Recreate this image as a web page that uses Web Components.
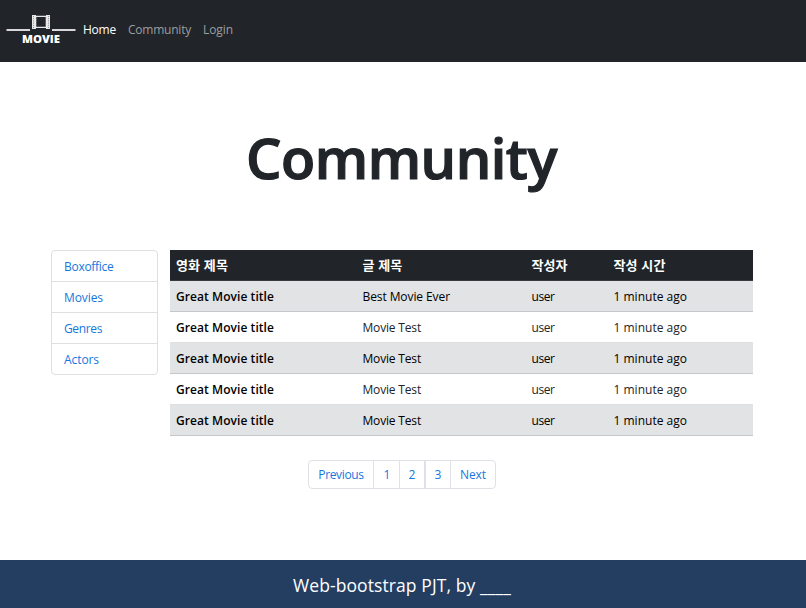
<!DOCTYPE html>
<html lang="ko">
<head>
<meta charset="utf-8">
<title>Community</title>
<style>
html, body { margin: 0; height: 100%; background: #fff; overflow: hidden; }
body { font: 400 12px/18px "Open Sans", "Noto Sans", "Noto Sans CJK KR", sans-serif; color: #212529; }
</style>
</head>
<body>
<community-page></community-page>
<script>
const define = (name, html, setup) => {
  customElements.define(name, class extends HTMLElement {
    connectedCallback() {
      if (this.shadowRoot) return;
      const t = document.createElement('template');
      t.innerHTML = typeof html === 'function' ? html(this) : html;
      this.attachShadow({ mode: 'open' }).append(t.content.cloneNode(true));
      if (setup) setup(this);
    }
  });
};

// A run of text tracked so that it takes the width given in its "w" attribute.
define('text-run', el => `<style>:host{display:inline-block;white-space:pre}</style><span>${el.getAttribute('text')}</span>`, el => {
  const span = el.shadowRoot.querySelector('span');
  const natural = span.getBoundingClientRect().width;
  const spacing = (parseFloat(el.getAttribute('w')) - natural) / span.textContent.length;
  span.style.letterSpacing = spacing.toFixed(3) + 'px';
});

define('movie-logo', `
<style>
:host{display:block;width:70px;height:32px}
svg{display:block}
text{font:800 11px "Open Sans",sans-serif;fill:#fff}
</style>
<svg width="70" height="32" viewBox="0 0 70 32">
  <path d="M0.500 16h23.500M46 16h23.500" stroke="#d9d6dc" stroke-width="1.800"/>
  <path fill="#e9e8e8" fill-rule="evenodd" d="M26 1h4v.8h10v-.8h4v14h-4v-1h-10v1h-4zM30.300 3v9.800h9.400v-9.800z"/>
  <path d="M27.500 2v12.500M42.500 2v12.500" stroke="#8b8d90" stroke-width="1" stroke-dasharray="1 1.200"/>
  <text x="16" y="29" textLength="38" lengthAdjust="spacingAndGlyphs">MOVIE</text>
</svg>`);

define('nav-bar', `
<style>
:host{display:flex;box-sizing:border-box;height:62px;background:#212529;padding:14px 6px 0}
nav{display:flex;gap:12px;padding:7px 0 0 7px;color:#9b9da0}
.active{color:#fff}
</style>
<movie-logo></movie-logo>
<nav><text-run class="active" w="33" text="Home"></text-run><text-run w="63" text="Community"></text-run><text-run w="30" text="Login"></text-run></nav>`);

define('side-list', el => `
<style>
:host{display:block;box-sizing:border-box;width:107px;height:125px;border:1px solid #dfdfdf;border-radius:4px;color:#1677e0}
div{box-sizing:border-box;height:31px;padding:7px 12px 0;border-bottom:1px solid #dfdfdf}
div:last-child{border:0}
</style>
${[['Boxoffice', 49.5], ['Movies', 39], ['Genres', 38], ['Actors', 35]].map(([t, w]) => `<div><text-run w="${w}" text="${t}"></text-run></div>`).join('')}`);

define('post-row', el => {
  const texts = el.getAttribute('cells').split('|');
  const widths = el.getAttribute('widths').split('|');
  return `
<style>
:host{display:grid;grid-template-columns:186.500px 169px 82px 1fr;box-sizing:border-box;height:31px;padding:7px 6px 0;border-bottom:1px solid #dfe0e2}
:host([head]){background:#212529;color:#fff;font-weight:700;font-size:13px;padding-top:6px;border-color:#373b3e}
:host([striped]){background:#e1e3e5;color:#000;border-color:#c5c8ca}
text-run:first-of-type{font-weight:600;color:#000}
:host([head]) text-run{font-weight:700;color:#fff}
</style>${texts.map((t, i) => `<text-run w="${widths[i]}" text="${t}"></text-run>`).join('')}`;
});

define('post-table', () => {
  const rows = ['Best Movie Ever', 'Movie Test', 'Movie Test', 'Movie Test', 'Movie Test'];
  return `
<style>:host{display:block;width:583px}</style>
<post-row head cells="영화 제목|글 제목|작성자|작성 시간" widths="52|40|36|52"></post-row>
${rows.map((r, i) => `<post-row ${i % 2 ? '' : 'striped'} cells="Great Movie title|${r}|user|1 minute ago" widths="98|${i ? 58.5 : 87.5}|23|73.500"></post-row>`).join('')}`;
});

define('page-list', `
<style>
:host{display:flex;box-sizing:border-box;width:188px;height:29px;border:1px solid #dee2e6;border-radius:4px;color:#1677e0}
div{box-sizing:border-box;display:flex;justify-content:center;padding-top:5px;border-right:1px solid #dee2e6;width:26px}
div:nth-of-type(1){width:65px}
div:nth-of-type(3){border-right-width:2px}
div:nth-of-type(4){width:25px}
div:last-child{width:44px;border:0}
</style>
<div><text-run w="45.500" text="Previous"></text-run></div><div><text-run w="6" text="1"></text-run></div><div><text-run w="7" text="2"></text-run></div><div><text-run w="7" text="3"></text-run></div><div><text-run w="26" text="Next"></text-run></div>`);

define('page-footer', `
<style>:host{display:flex;justify-content:center;box-sizing:border-box;height:48px;background:#243e62;color:#fff;font-size:17.500px;line-height:26px;padding:12px 2px 0 0}</style>
<text-run w="187" text="Web-bootstrap PJT, by "></text-run><text-run w="31" text="____"></text-run>`);

define('community-page', `
<style>
:host{display:flex;flex-direction:column;height:608px}
main{flex:1}
h1{display:flex;justify-content:center;margin:0;padding:60px 3px 0 0;height:128px;font-size:56px;line-height:70px;font-weight:600;-webkit-text-stroke:1.200px #212529}
.content{display:flex;gap:12px;padding-left:51px;height:210px}
.pages{display:flex;justify-content:center;padding-right:2px}
</style>
<nav-bar></nav-bar>
<main>
  <h1><text-run w="311" text="Community"></text-run></h1>
  <div class="content"><side-list></side-list><post-table></post-table></div>
  <div class="pages"><page-list></page-list></div>
</main>
<page-footer></page-footer>`);
</script>
</body>
</html>
